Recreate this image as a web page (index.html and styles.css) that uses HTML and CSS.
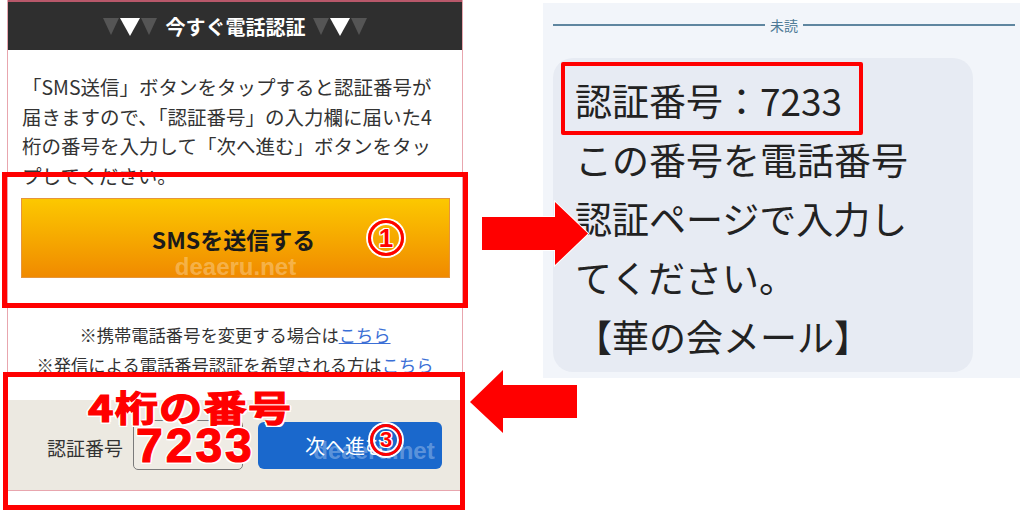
FILE: index.html
```html
<!DOCTYPE html>
<html lang="ja">
<head>
    <meta charset="UTF-8">
    <title>SMS認証の手順</title>
    <link rel="stylesheet" href="styles.css">
</head>
<body>
    <div class="stage">
        <!-- 左：認証ページ -->
        <div class="phone">
            <div class="phone-header">
                <span class="tri tri-grey"></span><span class="tri tri-white"></span><span class="tri tri-grey"></span>
                <span class="header-title">今すぐ電話認証</span>
                <span class="tri tri-grey"></span><span class="tri tri-white"></span><span class="tri tri-grey"></span>
            </div>
            <p class="intro">「SMS送信」ボタンをタップすると認証番号が<br>届きますので、「認証番号」の入力欄に届いた4<br>桁の番号を入力して「次へ進む」ボタンをタッ<br>プしてください。</p>
            <div class="sms-btn">
                <span class="sms-btn-label">SMSを送信する</span>
                <span class="watermark">deaeru.net</span>
            </div>
            <div class="notes">
                <p>※携帯電話番号を変更する場合は<a href="#">こちら</a></p>
                <p>※発信による電話番号認証を希望される方は<a href="#">こちら</a></p>
            </div>
            <div class="verify">
                <span class="verify-label">認証番号</span>
                <span class="verify-input"></span>
                <div class="next-btn">
                    <span>次へ進む</span>
                    <span class="watermark watermark-blue">deaeru.net</span>
                </div>
            </div>
        </div>

        <!-- 右：届いたSMS -->
        <div class="sms">
            <div class="unread">未読</div>
            <div class="bubble">
                <p>認証番号：7233<br>この番号を電話番号<br>認証ページで入力し<br>てください。<br>【華の会メール】</p>
                <div class="mark mark-code"></div>
            </div>
        </div>

        <!-- 注釈 -->
        <div class="mark mark-send"></div>
        <div class="mark mark-verify"></div>
        <div class="step step-1"><span>1</span></div>
        <div class="step step-3"><span>3</span></div>
        <div class="big-red big-label">4桁の番号</div>
        <div class="big-red big-code">7233</div>
        <svg class="arrows" width="1024" height="512" viewBox="0 0 1024 512">
            <polygon points="482,217 555,217 555,202 588,233.5 555,265 555,250 482,250" />
            <polygon points="577,385 503,385 503,370 470,402 503,433 503,418 577,418" />
        </svg>
    </div>
</body>
</html>
```

FILE: styles.css
```css
* {
    margin: 0;
    padding: 0;
    box-sizing: border-box;
}
body {
    background-color: #ffffff;
    font-family: "Noto Sans CJK JP", "Noto Sans", sans-serif;
    color: #333333;
    overflow: hidden;
}
.stage {
    position: relative;
    width: 1024px;
    height: 512px;
    display: flex;
    align-items: flex-start;
}

/* 左のページ */
.phone {
    width: 456px;
    margin-left: 7px;
    border-left: 1px solid #e8a6ae;
    border-right: 1px solid #e8a6ae;
    border-bottom: 1px solid #e8a6ae;
}
.phone-header {
    height: 50px;
    border-top: 2px solid #b8586a;
    background-color: #2f2f2f;
    display: flex;
    justify-content: center;
    align-items: center;
}
.header-title {
    color: #ffffff;
    font-size: 20px;
    font-weight: bold;
    margin: 0 7px 0 8px;
}
.tri {
    width: 0;
    height: 0;
    border-left: 8.5px solid transparent;
    border-right: 8.5px solid transparent;
    border-top: 17px solid #555555;
    margin: 1px 1px 0 0;
}
.tri-white {
    border-left-width: 10px;
    border-right-width: 10px;
    border-top: 18px solid #ffffff;
}
.intro {
    padding: 22px 8px 0 14px;
    font-size: 19.5px;
    line-height: 29.5px;
    white-space: nowrap;
}
.sms-btn {
    position: relative;
    height: 80px;
    margin: 8px 12px 0 13px;
    background: linear-gradient(#fcc800, #f08a00);
    border: 1px solid #e6953a;
    display: flex;
    justify-content: center;
    align-items: center;
}
.sms-btn-label {
    font-size: 23px;
    font-weight: bold;
    color: #1a1a1a;
    margin: 2px 4px 0 0;
}
.watermark {
    position: absolute;
    left: 0;
    right: 0;
    top: 54px;
    text-align: center;
    font-family: "Liberation Sans", Arial, sans-serif;
    font-size: 24px;
    font-weight: bold;
    line-height: 28px;
    color: rgba(255, 255, 255, 0.3);
}
.notes {
    margin-top: 42px;
    text-align: center;
    font-size: 17.3px;
    line-height: 30px;
}
.notes a {
    color: #3b6fd6;
}
.verify {
    margin-top: 20px;
    height: 90px;
    background-color: #ece9e1;
    display: flex;
    align-items: center;
    padding-left: 39px;
}
.verify-label {
    font-size: 19px;
    margin-top: 4px;
}
.verify-input {
    width: 110px;
    height: 50px;
    margin-left: 10px;
    border: 1.5px solid #7a7a7a;
    border-radius: 5px;
    background-color: #efece5;
}
.next-btn {
    position: relative;
    width: 184px;
    height: 47px;
    margin-left: 15px;
    border-radius: 6px;
    background-color: #1a68cc;
    color: #ffffff;
    font-size: 20px;
    display: flex;
    justify-content: center;
    align-items: center;
    padding-right: 10px;
}
.watermark-blue {
    top: 15px;
    left: 48px;
    color: rgba(255, 255, 255, 0.3);
}

/* 右のSMS画面 */
.sms {
    width: 477px;
    height: 375px;
    margin: 3px 4px 0 auto;
    background-color: #f2f5fa;
    padding: 12px 5px 0 10px;
}
.unread {
    display: flex;
    align-items: center;
    gap: 5px;
    height: 20px;
    font-size: 14px;
    color: #4f7a96;
}
.unread::before,
.unread::after {
    content: "";
    flex: 1;
    height: 2px;
    background-color: #5f86a0;
}
.bubble {
    position: relative;
    width: 420px;
    height: 314px;
    margin-top: 23px;
    border-radius: 20px;
    background-color: #e7ebf3;
    padding: 13px 0 0 22px;
    font-size: 37px;
    line-height: 59px;
    color: #222222;
    white-space: nowrap;
}

/* 注釈 */
.mark {
    position: absolute;
    border: 5px solid #ff0000;
}
.mark-send {
    left: 2px;
    top: 172px;
    width: 466px;
    height: 136px;
}
.mark-verify {
    left: 3px;
    top: 372px;
    width: 462px;
    height: 138px;
}
.mark-code {
    left: 8px;
    top: 4px;
    width: 302px;
    height: 73px;
    border-width: 4px;
    border-radius: 2px;
}
.step {
    position: absolute;
    width: 36px;
    height: 36px;
    border: 3px solid #ff0000;
    border-radius: 50%;
    box-shadow: 0 0 0 2px #ffffff, inset 0 0 0 2px #ffffff;
    display: flex;
    justify-content: center;
    align-items: center;
    font-family: "Liberation Sans", Arial, sans-serif;
    font-weight: bold;
    color: #ff0000;
    text-shadow: 1px 0 #fff, -1px 0 #fff, 0 1px #fff, 0 -1px #fff, 1px 1px #fff, -1px -1px #fff, 1px -1px #fff, -1px 1px #fff;
}
.step-1 {
    left: 368px;
    top: 220px;
    font-size: 26px;
}
.step-3 {
    left: 370px;
    top: 424px;
    width: 32px;
    height: 32px;
    font-size: 22px;
}
.big-red {
    position: absolute;
    color: #ff0000;
    font-weight: bold;
    line-height: 1;
    white-space: nowrap;
    -webkit-text-stroke: 1.2px #ff0000;
    text-shadow: 2px 0 #fff, -2px 0 #fff, 0 2px #fff, 0 -2px #fff, 1.5px 1.5px #fff, -1.5px -1.5px #fff, 1.5px -1.5px #fff, -1.5px 1.5px #fff;
}
.big-label {
    left: 88px;
    top: 388px;
    font-size: 36px;
    letter-spacing: 1px;
    transform: scaleX(1.2);
    transform-origin: left top;
}
.big-code {
    left: 136px;
    top: 422px;
    font-family: "Liberation Sans", Arial, sans-serif;
    font-size: 48px;
    letter-spacing: 3px;
}
.arrows {
    position: absolute;
    left: 0;
    top: 0;
    pointer-events: none;
}
.arrows polygon {
    fill: #ff0000;
    stroke: #ffffff;
    stroke-width: 2;
    paint-order: stroke;
}
```
